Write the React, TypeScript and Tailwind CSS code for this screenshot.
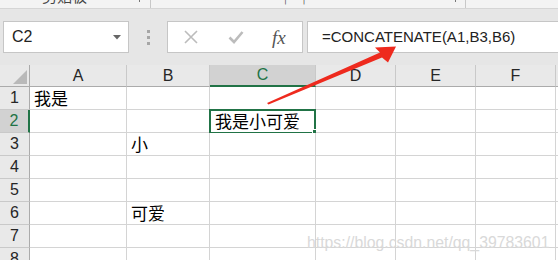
import React from "react";

function Cell({
  children,
  className = "",
}: {
  children?: React.ReactNode;
  className?: string;
}) {
  return (
    <div
      className={`relative border-r border-b border-[#d4d4d4] bg-white flex items-end pl-[4px] pb-[1px] text-[17px] leading-[20px] text-black whitespace-nowrap ${className}`}
      style={{ fontFamily: '"Noto Sans CJK SC", "Noto Sans", sans-serif' }}
    >
      {children}
    </div>
  );
}

function ColHead({ label, active = false }: { label: string; active?: boolean }) {
  return (
    <div
      className={`flex items-center justify-center text-[16px] border-r border-[#c9c9c9] ${
        active
          ? "bg-[#d2d2d2] text-[#217346] border-b-2 border-b-[#217346]"
          : "bg-[#e9e9e9] text-[#262626] border-b border-b-[#ababab]"
      }`}
    >
      {label}
    </div>
  );
}

function RowHead({ label, active = false }: { label: string; active?: boolean }) {
  return (
    <div
      className={`flex items-center justify-center text-[16px] border-b border-[#c9c9c9] ${
        active
          ? "bg-[#d2d2d2] text-[#217346] border-r-2 border-r-[#217346]"
          : "bg-[#e9e9e9] text-[#262626] border-r border-r-[#ababab]"
      }`}
    >
      {label}
    </div>
  );
}

export default function App() {
  const data: Record<string, string> = {
    "1-0": "我是",
    "3-1": "小",
    "6-1": "可爱",
  };
  const letters = ["A", "B", "C", "D", "E", "F", ""];
  return (
    <div
      className="relative w-[558px] h-[260px] overflow-hidden bg-white flex flex-col"
      style={{ fontFamily: '"Liberation Sans", Arial, sans-serif' }}
    >
      {/* ribbon remnant */}
      <div
        className="h-[9px] shrink-0 bg-[#f3f3f3] border-b border-[#d5d5d5] overflow-hidden flex items-start text-[15px] text-[#444]"
        style={{ fontFamily: '"Noto Sans CJK SC", sans-serif' }}
      >
        <span className="shrink-0 ml-[42px] -mt-[14px] leading-[20px]">剪贴板</span>
        <span className="shrink-0 ml-[48px] -mt-[4px] w-[5px] h-[6px] border-r border-t border-[#777]" />
        <span className="shrink-0 ml-[10px] h-[9px] border-l border-[#c8c8c8]" />
        <span className="shrink-0 ml-[127px] -mt-[14px] leading-[20px] text-[#444]">┐ ┌</span>
        <span className="shrink-0 ml-[140px] -mt-[4px] w-[5px] h-[6px] border-r border-t border-[#777]" />
        <span className="shrink-0 ml-[9px] h-[9px] border-l border-[#c8c8c8]" />
      </div>

      {/* formula bar */}
      <div className="h-[56px] shrink-0 bg-[#e6e6e6] flex items-start pt-[12px] pl-[3px]">
        <div className="shrink-0 w-[126px] h-[32px] bg-white border border-[#c6c6c6] flex items-center pl-[8px] pr-[7px]">
          <span className="text-[16px] text-[#222] flex-1">C2</span>
          <svg width="8" height="5" viewBox="0 0 8 5" className="mt-[1px]">
            <polygon points="0,0 8,0 4,4.5" fill="#666" />
          </svg>
        </div>
        <div className="shrink-0 w-[38px] h-[32px] flex flex-col items-center justify-center gap-[3px]">
          <span className="w-[3px] h-[3px] bg-[#a6a6a6]" />
          <span className="w-[3px] h-[3px] bg-[#a6a6a6]" />
          <span className="w-[3px] h-[3px] bg-[#a6a6a6]" />
        </div>
        <div className="shrink-0 w-[136px] h-[32px] bg-white border border-[#c6c6c6] flex items-center pl-[16px]">
          <svg width="14" height="14" viewBox="0 0 14 14" className="shrink-0">
            <path d="M1 1 L13 13 M13 1 L1 13" stroke="#bcbcbc" strokeWidth="1.6" fill="none" />
          </svg>
          <svg width="16" height="14" viewBox="0 0 16 14" className="shrink-0 ml-[30px]">
            <path d="M1.5 7.5 L6 12 L14.5 2" stroke="#bcbcbc" strokeWidth="2.6" fill="none" />
          </svg>
          <span
            className="ml-[28px] text-[19px] italic text-[#555] leading-none"
            style={{ fontFamily: '"Liberation Serif", "Times New Roman", serif' }}
          >
            fx
          </span>
        </div>
        <div className="shrink-0 ml-[4px] w-[260px] h-[32px] bg-white border border-[#c6c6c6] border-r-0 flex items-center pl-[14px]">
          <span className="text-[15px] text-[#222] whitespace-nowrap">=CONCATENATE(A1,B3,B6)</span>
        </div>
      </div>

      {/* grid */}
      <div className="grid grid-cols-[30px_97px_83px_106px_80px_80px_80px_80px] grid-rows-[22px_repeat(8,23px)]">
        <div className="relative bg-[#e9e9e9] border-r border-b border-[#ababab]">
          <svg width="14" height="14" viewBox="0 0 14 14" className="absolute left-[13px] top-[5px]">
            <polygon points="14,0 14,14 0,14" fill="#b9b9b9" />
          </svg>
        </div>
        {letters.map((l, i) => (
          <ColHead key={i} label={l} active={l === "C"} />
        ))}
        {[1, 2, 3, 4, 5, 6, 7, 8].map((r) => (
          <React.Fragment key={r}>
            <RowHead label={String(r)} active={r === 2} />
            {letters.map((l, ci) => (
              <Cell key={ci}>
                {data[`${r}-${ci}`]}
                {r === 2 && ci === 2 && (
                  <>
                    <span className="pl-[1px]">我是小可爱</span>
                    <div className="absolute -left-[1px] -top-[1px] w-[107px] h-[25px] border-2 border-[#217346]" />
                    <div className="absolute -right-[4px] -bottom-[4px] w-[7px] h-[7px] bg-[#217346] border border-white" />
                  </>
                )}
              </Cell>
            ))}
          </React.Fragment>
        ))}
      </div>

      {/* arrow annotation */}
      <svg
        className="absolute left-0 top-0 pointer-events-none"
        width="558"
        height="260"
        viewBox="0 0 558 260"
      >
        <polygon
          points="267,103 380,52.5 375,47.5 396,46.5 388,62.5 382,57.5 268.5,104.5"
          fill="#ee2a1e"
        />
      </svg>

      {/* watermark */}
      <div
        className="absolute left-[307px] top-[233px] text-[15.8px] text-[#d9d9d9] leading-[20px]"
        style={{ fontFamily: '"Liberation Sans", Arial, sans-serif' }}
      >
        https://blog.csdn.net/qq_39783601
      </div>
    </div>
  );
}
